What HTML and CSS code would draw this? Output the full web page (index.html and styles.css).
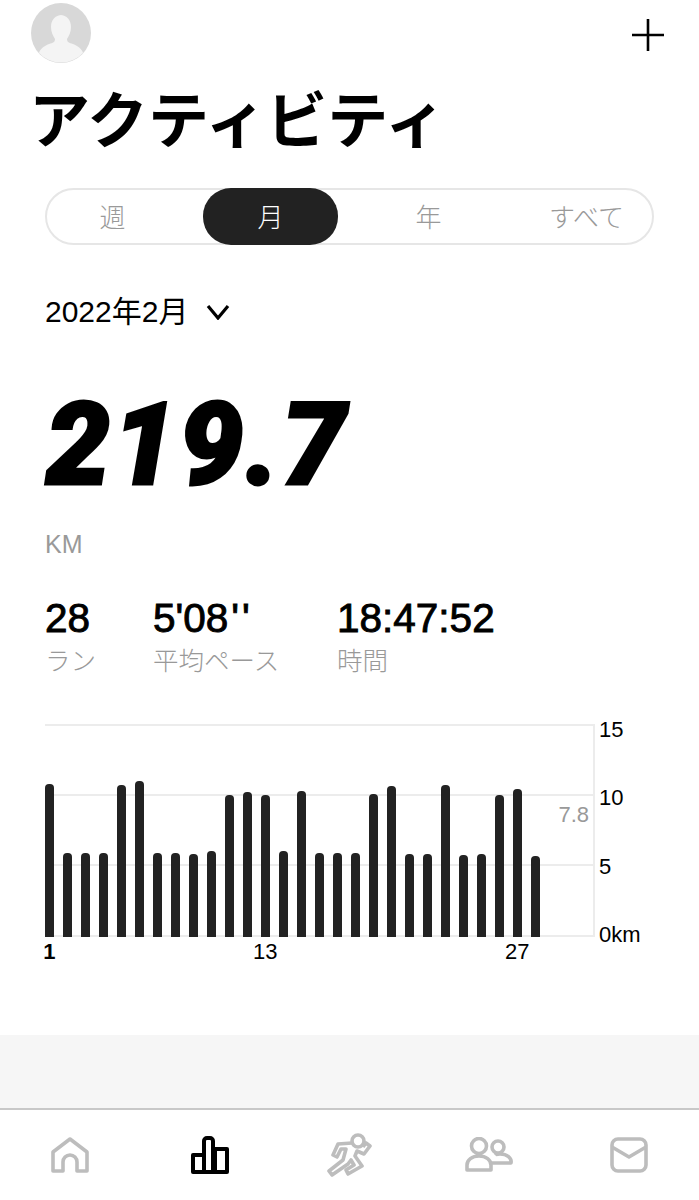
FILE: index.html
```html
<!DOCTYPE html>
<html lang="ja">
<head>
    <meta charset="UTF-8">
    <meta name="viewport" content="width=device-width, initial-scale=1.0">
    <title>アクティビティ</title>
    <link rel="stylesheet" href="styles.css">
</head>
<body>
    <div class="page">
        <header class="top">
            <svg class="avatar" viewBox="0 0 60 60">
                <circle cx="30" cy="30" r="30" fill="#d8d8d8"/>
                <path d="M31 12c-7 0-11 5-11 12 0 5 2 9 4 12 0 3-2 4-6 5-5 2-9 5-10 9a30 30 0 0 0 44 0c-1-4-5-7-10-9-4-1-6-2-6-5 2-3 4-7 4-12 0-7-4-12-11-12z" fill="#f4f4f4"/>
            </svg>
            <svg class="plus" viewBox="0 0 32 32">
                <path d="M16 0V32M0 16H32" fill="none" stroke="#000" stroke-width="2.6" stroke-linecap="round"/>
            </svg>
        </header>

        <h1>アクティビティ</h1>

        <div class="tabs">
            <div class="tab">週</div>
            <div class="tab active">月</div>
            <div class="tab">年</div>
            <div class="tab">すべて</div>
        </div>

        <div class="month">
            <span>2022年2月</span>
            <svg class="chevron" viewBox="0 0 24 16">
                <path d="M2 2L12 14L22 2" fill="none" stroke="#000" stroke-width="3.2"/>
            </svg>
        </div>

        <div class="total">219.7</div>
        <div class="unit">KM</div>

        <div class="stats">
            <div class="stat stat-runs">
                <div class="stat-value">28</div>
                <div class="stat-label">ラン</div>
            </div>
            <div class="stat stat-pace">
                <div class="stat-value">5'08<span class="seconds">''</span></div>
                <div class="stat-label">平均ペース</div>
            </div>
            <div class="stat">
                <div class="stat-value">18:47:52</div>
                <div class="stat-label">時間</div>
            </div>
        </div>

        <div class="chart">
            <div class="plot-col">
                <div class="plot">
                    <div class="grid-lines">
                        <div class="grid-row"></div>
                        <div class="grid-row"></div>
                        <div class="grid-row grid-row-last"></div>
                    </div>
                    <div class="bars">
                        <div class="bar" style="height:153px"></div>
                        <div class="bar" style="height:84px"></div>
                        <div class="bar" style="height:84px"></div>
                        <div class="bar" style="height:84px"></div>
                        <div class="bar" style="height:152px"></div>
                        <div class="bar" style="height:156px"></div>
                        <div class="bar" style="height:84px"></div>
                        <div class="bar" style="height:84px"></div>
                        <div class="bar" style="height:83px"></div>
                        <div class="bar" style="height:86px"></div>
                        <div class="bar" style="height:142px"></div>
                        <div class="bar" style="height:145px"></div>
                        <div class="bar" style="height:142px"></div>
                        <div class="bar" style="height:86px"></div>
                        <div class="bar" style="height:146px"></div>
                        <div class="bar" style="height:84px"></div>
                        <div class="bar" style="height:84px"></div>
                        <div class="bar" style="height:84px"></div>
                        <div class="bar" style="height:143px"></div>
                        <div class="bar" style="height:151px"></div>
                        <div class="bar" style="height:83px"></div>
                        <div class="bar" style="height:83px"></div>
                        <div class="bar" style="height:152px"></div>
                        <div class="bar" style="height:82px"></div>
                        <div class="bar" style="height:83px"></div>
                        <div class="bar" style="height:142px"></div>
                        <div class="bar" style="height:148px"></div>
                        <div class="bar" style="height:81px"></div>
                    </div>
                    <div class="average">7.8</div>
                </div>
                <div class="days">
                    <div class="day day-first">1</div>
                    <div class="day"></div><div class="day"></div><div class="day"></div>
                    <div class="day"></div><div class="day"></div><div class="day"></div>
                    <div class="day"></div><div class="day"></div><div class="day"></div>
                    <div class="day"></div><div class="day"></div>
                    <div class="day">13</div>
                    <div class="day"></div><div class="day"></div><div class="day"></div>
                    <div class="day"></div><div class="day"></div><div class="day"></div>
                    <div class="day"></div><div class="day"></div><div class="day"></div>
                    <div class="day"></div><div class="day"></div><div class="day"></div>
                    <div class="day"></div>
                    <div class="day">27</div>
                    <div class="day"></div>
                </div>
            </div>
            <div class="axis">
                <div>15</div>
                <div>10</div>
                <div>5</div>
                <div>0km</div>
            </div>
        </div>

        <div class="spacer"></div>
        <div class="band"></div>

        <nav class="tabbar">
            <svg class="nav-icon nav-home" viewBox="0 0 38 36">
                <path d="M2 34V15L19 2L36 15V34H26V25a7 7 0 0 0-14 0V34Z"/>
            </svg>
            <svg class="nav-icon nav-chart" viewBox="0 0 38 38">
                <path d="M2 36V19H13V36ZM13 36V5a3 3 0 0 1 3-3h3a3 3 0 0 1 3 3V36ZM24 36V13H36V36Z"/>
            </svg>
            <svg class="nav-icon nav-run" viewBox="0 0 46 44">
                <circle cx="32" cy="8" r="6"/>
                <path d="M26 10L12 11L7 22L11 24L15 16L20 16L17 27L3 38L6 42L22 31L25 27L28 32L20 37L22 41L36 33L29 23L31 18L38 21L44 13L40 10L37 14"/>
            </svg>
            <svg class="nav-icon nav-friends" viewBox="0 0 50 36">
                <circle cx="15" cy="9" r="7.5"/>
                <path d="M3 33v-5c0-5 5-9 12-9s12 4 12 9v5Z"/>
                <circle cx="34" cy="10" r="6"/>
                <path d="M27 26H47c1-5-4-9-11-9-2 0-4 0-5 1"/>
            </svg>
            <svg class="nav-icon nav-mail" viewBox="0 0 38 36">
                <rect x="2" y="2" width="34" height="32" rx="6"/>
                <path d="M2 10L19 20L36 10"/>
            </svg>
        </nav>
    </div>
</body>
</html>
```

FILE: styles.css
```css
* {
    box-sizing: border-box;
}
body {
    margin: 0;
    background-color: #fff;
    color: #000;
    font-family: "Liberation Sans", "Noto Sans CJK JP", sans-serif;
}
.page {
    width: 699px;
    height: 1200px;
    overflow: hidden;
    display: flex;
    flex-direction: column;
}
.top {
    height: 63px;
    padding: 3px 35px 0 31px;
    display: flex;
    justify-content: space-between;
    align-items: flex-start;
}
.avatar {
    width: 60px;
    height: 60px;
}
.plus {
    width: 32px;
    height: 32px;
    margin-top: 16px;
}
h1 {
    margin: 14px 0 0 29px;
    height: 80px;
    font-family: "Noto Sans CJK JP", sans-serif;
    font-size: 61px;
    line-height: 80px;
    font-weight: 700;
}
.tabs {
    margin: 31px 45px 0;
    height: 57px;
    border: 2px solid #e6e6e6;
    border-radius: 29px;
    display: flex;
    justify-content: space-between;
}
.tab {
    width: 135px;
    margin: -2px 0;
    padding-bottom: 2px;
    flex-shrink: 0;
    display: flex;
    align-items: center;
    justify-content: center;
    border-radius: 28px;
    font-family: "Noto Sans CJK JP", sans-serif;
    font-size: 26px;
    font-weight: 300;
    color: #999;
}
.tab:first-child {
    margin-left: -2px;
}
.tab:last-child {
    margin-right: -2px;
}
.tab.active {
    background-color: #222;
    color: #fff;
}
.month {
    margin: 44px 0 0 45px;
    height: 40px;
    display: flex;
    align-items: center;
    font-size: 30px;
}
.chevron {
    width: 24px;
    height: 16px;
    margin: 6px 0 0 18px;
}
.total {
    margin: 56px 0 0 46px;
    height: 120px;
    font-family: Roboto, sans-serif;
    font-size: 114px;
    line-height: 120px;
    font-weight: 900;
    font-style: italic;
    letter-spacing: 2.5px;
    -webkit-text-stroke: 3px #000;
}
.unit {
    margin: 24px 0 0 45px;
    height: 30px;
    font-size: 25px;
    line-height: 30px;
    color: #999;
}
.stats {
    margin: 36px 0 0 45px;
    display: flex;
}
.stat-runs {
    width: 108px;
}
.stat-pace {
    width: 184px;
}
.stat-value {
    height: 46px;
    font-size: 40.5px;
    line-height: 46px;
    -webkit-text-stroke: 0.9px #000;
}
.seconds {
    margin-left: 3px;
    letter-spacing: 3px;
}
.stat-label {
    height: 36px;
    font-family: "Noto Sans CJK JP", sans-serif;
    font-size: 25.5px;
    line-height: 36px;
    font-weight: 300;
    color: #999;
}
.chart {
    margin: 47px 0 0 45px;
    display: flex;
}
.plot-col {
    width: 550px;
}
.plot {
    position: relative;
    display: grid;
    height: 213px;
}
.grid-lines,
.bars {
    grid-area: 1 / 1;
}
.grid-lines {
    display: flex;
    flex-direction: column;
    border-right: 2px solid #ececec;
}
.grid-row {
    height: 70px;
    border-top: 2px solid #ececec;
}
.grid-row-last {
    height: 73px;
    border-bottom: 2px solid #ececec;
}
.bars {
    display: flex;
    align-items: flex-end;
    gap: 9.5px;
}
.bar {
    width: 8.5px;
    background-color: #222;
    border-radius: 4px 4px 0 0;
}
.average {
    position: absolute;
    right: 6px;
    top: 78px;
    font-size: 22px;
    color: #999;
}
.days {
    margin-top: 3px;
    display: flex;
    gap: 9.5px;
    height: 24px;
    font-size: 22px;
    line-height: 24px;
}
.day {
    width: 8.5px;
    display: flex;
    justify-content: center;
    white-space: nowrap;
}
.day-first {
    font-weight: 700;
}
.axis {
    margin: -6px 0 0 4px;
    height: 229px;
    display: flex;
    flex-direction: column;
    justify-content: space-between;
    font-size: 22px;
    line-height: 24px;
}
.spacer {
    flex: 1;
}
.band {
    height: 73px;
    background-color: #f6f6f6;
}
.tabbar {
    height: 92px;
    border-top: 2px solid #c8c8c8;
    display: grid;
    grid-template-columns: repeat(5, 1fr);
    justify-items: center;
    align-items: center;
}
.nav-icon {
    fill: none;
    stroke: #bdbdbd;
    stroke-width: 3.6;
    stroke-linejoin: round;
}
.nav-home {
    width: 38px;
    height: 36px;
}
.nav-chart {
    width: 38px;
    height: 38px;
    stroke: #000;
    stroke-width: 4;
}
.nav-run {
    width: 46px;
    height: 44px;
}
.nav-friends {
    width: 50px;
    height: 36px;
}
.nav-mail {
    width: 38px;
    height: 36px;
}
```
